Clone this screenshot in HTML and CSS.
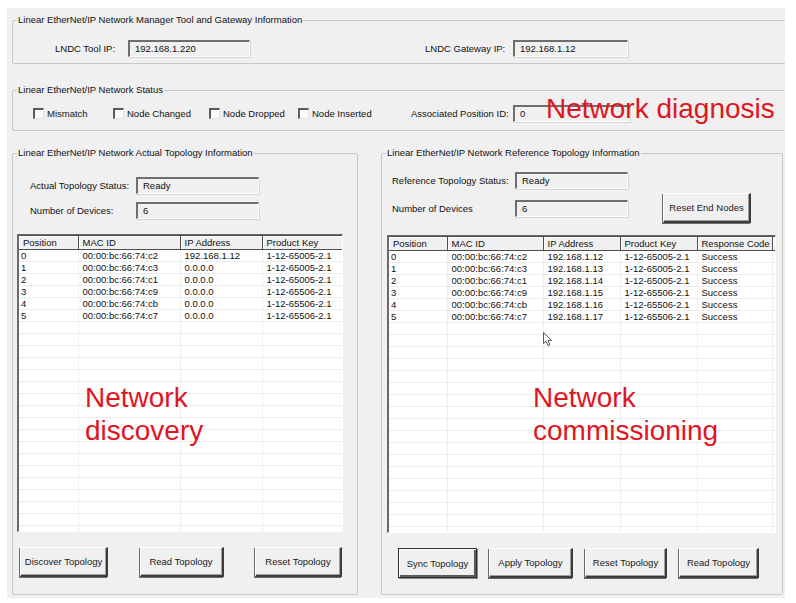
FILE: index.html
```html
<!DOCTYPE html>
<html lang="en">
<head>
    <meta charset="UTF-8">
    <title>Linear EtherNet/IP Network Manager</title>
    <link rel="stylesheet" href="styles.css">
</head>
<body>
    <div class="window">
        <fieldset class="group group-gateway">
            <legend>Linear EtherNet/IP Network Manager Tool and Gateway Information</legend>
            <div class="gateway-row">
                <span class="label label-tool">LNDC Tool IP:</span>
                <span class="textbox tb-tool">192.168.1.220</span>
                <span class="label label-gateway">LNDC Gateway IP:</span>
                <span class="textbox tb-gateway">192.168.1.12</span>
            </div>
        </fieldset>

        <fieldset class="group group-status">
            <legend>Linear EtherNet/IP Network Status</legend>
            <div class="status-row">
                <label class="check check-mismatch"><span class="box"></span>Mismatch</label>
                <label class="check check-changed"><span class="box"></span>Node Changed</label>
                <label class="check check-dropped"><span class="box"></span>Node Dropped</label>
                <label class="check check-inserted"><span class="box"></span>Node Inserted</label>
                <span class="label label-assoc">Associated Position ID:</span>
                <span class="textbox tb-assoc">0</span>
            </div>
        </fieldset>

        <div class="topology">
            <fieldset class="group group-actual">
                <legend>Linear EtherNet/IP Network Actual Topology Information</legend>
                <div class="group-body">
                    <div class="field">
                        <span class="label label-actual">Actual Topology Status:</span>
                        <span class="textbox tb-actual">Ready</span>
                    </div>
                    <div class="field field-second">
                        <span class="label label-actual">Number of Devices:</span>
                        <span class="textbox tb-actual">6</span>
                    </div>
                    <div class="list list-actual">
                        <table>
                            <colgroup><col style="width:59px"><col style="width:102px"><col style="width:82px"><col style="width:80px"></colgroup>
                            <thead>
                                <tr><th>Position</th><th>MAC ID</th><th>IP Address</th><th>Product Key</th></tr>
                            </thead>
                            <tbody>
                                <tr><td>0</td><td>00:00:bc:66:74:c2</td><td>192.168.1.12</td><td>1-12-65005-2.1</td></tr>
                                <tr><td>1</td><td>00:00:bc:66:74:c3</td><td>0.0.0.0</td><td>1-12-65005-2.1</td></tr>
                                <tr><td>2</td><td>00:00:bc:66:74:c1</td><td>0.0.0.0</td><td>1-12-65005-2.1</td></tr>
                                <tr><td>3</td><td>00:00:bc:66:74:c9</td><td>0.0.0.0</td><td>1-12-65506-2.1</td></tr>
                                <tr><td>4</td><td>00:00:bc:66:74:cb</td><td>0.0.0.0</td><td>1-12-65506-2.1</td></tr>
                                <tr><td>5</td><td>00:00:bc:66:74:c7</td><td>0.0.0.0</td><td>1-12-65506-2.1</td></tr>
                                <tr><td></td><td></td><td></td><td></td></tr>
                                <tr><td></td><td></td><td></td><td></td></tr>
                                <tr><td></td><td></td><td></td><td></td></tr>
                                <tr><td></td><td></td><td></td><td></td></tr>
                                <tr><td></td><td></td><td></td><td></td></tr>
                                <tr><td></td><td></td><td></td><td></td></tr>
                                <tr><td></td><td></td><td></td><td></td></tr>
                                <tr><td></td><td></td><td></td><td></td></tr>
                                <tr><td></td><td></td><td></td><td></td></tr>
                                <tr><td></td><td></td><td></td><td></td></tr>
                                <tr><td></td><td></td><td></td><td></td></tr>
                                <tr><td></td><td></td><td></td><td></td></tr>
                                <tr><td></td><td></td><td></td><td></td></tr>
                                <tr><td></td><td></td><td></td><td></td></tr>
                                <tr><td></td><td></td><td></td><td></td></tr>
                                <tr><td></td><td></td><td></td><td></td></tr>
                                <tr><td></td><td></td><td></td><td></td></tr>
                                <tr><td></td><td></td><td></td><td></td></tr>
                            </tbody>
                        </table>
                    </div>
                    <div class="buttons buttons-actual">
                        <button class="btn btn-discover">Discover Topology</button>
                        <button class="btn btn-read">Read Topology</button>
                        <button class="btn btn-reset">Reset Topology</button>
                    </div>
                </div>
            </fieldset>

            <fieldset class="group group-reference">
                <legend>Linear EtherNet/IP Network Reference Topology Information</legend>
                <div class="group-body">
                    <div class="field field-ref-first">
                        <span class="label label-ref">Reference Topology Status:</span>
                        <span class="textbox tb-ref">Ready</span>
                    </div>
                    <div class="field field-ref-second">
                        <span class="label label-ref">Number of Devices</span>
                        <span class="textbox tb-ref">6</span>
                        <button class="btn btn-end-nodes">Reset End Nodes</button>
                    </div>
                    <div class="list list-reference">
                        <table>
                            <colgroup><col style="width:58px"><col style="width:96px"><col style="width:77px"><col style="width:77px"><col style="width:75px"><col style="width:3px"></colgroup>
                            <thead>
                                <tr><th>Position</th><th>MAC ID</th><th>IP Address</th><th>Product Key</th><th>Response Code</th><th class="filler"></th></tr>
                            </thead>
                            <tbody>
                                <tr><td>0</td><td>00:00:bc:66:74:c2</td><td>192.168.1.12</td><td>1-12-65005-2.1</td><td>Success</td><td></td></tr>
                                <tr><td>1</td><td>00:00:bc:66:74:c3</td><td>192.168.1.13</td><td>1-12-65005-2.1</td><td>Success</td><td></td></tr>
                                <tr><td>2</td><td>00:00:bc:66:74:c1</td><td>192.168.1.14</td><td>1-12-65005-2.1</td><td>Success</td><td></td></tr>
                                <tr><td>3</td><td>00:00:bc:66:74:c9</td><td>192.168.1.15</td><td>1-12-65506-2.1</td><td>Success</td><td></td></tr>
                                <tr><td>4</td><td>00:00:bc:66:74:cb</td><td>192.168.1.16</td><td>1-12-65506-2.1</td><td>Success</td><td></td></tr>
                                <tr><td>5</td><td>00:00:bc:66:74:c7</td><td>192.168.1.17</td><td>1-12-65506-2.1</td><td>Success</td><td></td></tr>
                                <tr><td></td><td></td><td></td><td></td><td></td><td></td></tr>
                                <tr><td></td><td></td><td></td><td></td><td></td><td></td></tr>
                                <tr><td></td><td></td><td></td><td></td><td></td><td></td></tr>
                                <tr><td></td><td></td><td></td><td></td><td></td><td></td></tr>
                                <tr><td></td><td></td><td></td><td></td><td></td><td></td></tr>
                                <tr><td></td><td></td><td></td><td></td><td></td><td></td></tr>
                                <tr><td></td><td></td><td></td><td></td><td></td><td></td></tr>
                                <tr><td></td><td></td><td></td><td></td><td></td><td></td></tr>
                                <tr><td></td><td></td><td></td><td></td><td></td><td></td></tr>
                                <tr><td></td><td></td><td></td><td></td><td></td><td></td></tr>
                                <tr><td></td><td></td><td></td><td></td><td></td><td></td></tr>
                                <tr><td></td><td></td><td></td><td></td><td></td><td></td></tr>
                                <tr><td></td><td></td><td></td><td></td><td></td><td></td></tr>
                                <tr><td></td><td></td><td></td><td></td><td></td><td></td></tr>
                                <tr><td></td><td></td><td></td><td></td><td></td><td></td></tr>
                                <tr><td></td><td></td><td></td><td></td><td></td><td></td></tr>
                                <tr><td></td><td></td><td></td><td></td><td></td><td></td></tr>
                                <tr><td></td><td></td><td></td><td></td><td></td><td></td></tr>
                            </tbody>
                        </table>
                    </div>
                    <div class="buttons buttons-reference">
                        <button class="btn btn-sync">Sync Topology</button>
                        <button class="btn btn-apply">Apply Topology</button>
                        <button class="btn btn-reset-ref">Reset Topology</button>
                        <button class="btn btn-read-ref">Read Topology</button>
                    </div>
                </div>
            </fieldset>
        </div>

        <!-- red annotations laid over the dialog -->
        <span class="note note-diagnosis">Network diagnosis</span>
        <span class="note note-discovery">Network<br>discovery</span>
        <span class="note note-commissioning">Network<br>commissioning</span>
        <svg class="cursor" width="10" height="15" viewBox="0 0 10 15">
            <path d="M0.5 0.5 L0.5 11.5 L3.1 9.1 L5 13.6 L6.9 12.8 L5 8.4 L8.6 8.4 Z" fill="#ffffff" stroke="#5a5a5a" stroke-width="1" stroke-linejoin="round"/>
        </svg>
    </div>
</body>
</html>
```

FILE: styles.css
```css
  /* Page and dialog */
  body {
      margin: 0;
      background: #ffffff;
      font-family: "Liberation Sans", Arial, sans-serif;
      font-size: 9.5px;
      color: #101010;
  }

  .window {
      position: relative;
      width: 778px;
      height: 590px;
      margin: 8px 0 0 7px;
      padding: 6px 0 0 5px;
      box-sizing: border-box;
      background: #f0f0f0;
      overflow: hidden;
      display: flex;
      flex-direction: column;
  }

  /* Group boxes */
  .group {
      margin: 0;
      padding: 0;
      min-width: 0;
      box-sizing: border-box;
      border: 1px solid #c8c8c8;
      border-radius: 2px;
  }

  .group legend {
      margin-left: 4px;
      padding: 0 1px;
      height: 12px;
      line-height: 12px;
  }

  .group-gateway {
      width: 790px;
      height: 50px;
  }

  .group-status {
      width: 790px;
      height: 47px;
      margin-top: 20px;
  }

  .gateway-row,
  .status-row {
      display: flex;
      align-items: center;
      height: 17px;
  }

  .gateway-row {
      margin-top: 14px;
      padding-left: 42px;
  }

  .status-row {
      margin-top: 9px;
      padding-left: 20px;
  }

  .label {
      flex: none;
      white-space: nowrap;
  }

  .label-tool { width: 73px; }
  .label-gateway { width: 88px; margin-left: 175px; }
  .label-assoc { width: 102px; }
  .label-actual { width: 106px; }
  .label-ref { width: 123px; }

  /* Read-only text boxes */
  .textbox {
      flex: none;
      box-sizing: border-box;
      height: 17px;
      line-height: 14px;
      padding-left: 5px;
      background: #f0f0f0;
      border-top: 2px solid #6e6e6e;
      border-left: 2px solid #6e6e6e;
      border-right: 1px solid #fdfdfd;
      border-bottom: 1px solid #fdfdfd;
      box-shadow: 1px 1px 0 #d6d6d6;
  }

  .tb-tool { width: 122px; }
  .tb-gateway { width: 115px; }
  .tb-assoc { width: 117px; }
  .tb-actual { width: 123px; }
  .tb-ref { width: 113px; }

  /* Check boxes */
  .check {
      display: flex;
      align-items: center;
      flex: none;
  }

  .check .box {
      width: 11px;
      height: 11px;
      margin-right: 3px;
      box-sizing: border-box;
      background: #fbfbfb;
      border-top: 2px solid #5c5c5c;
      border-left: 2px solid #5c5c5c;
      border-right: 1px solid #e2e2e2;
      border-bottom: 1px solid #e2e2e2;
  }

  .check-mismatch { width: 80px; }
  .check-changed { width: 96px; }
  .check-dropped { width: 89px; }
  .check-inserted { width: 113px; }

  /* Topology panels */
  .topology {
      display: flex;
      gap: 23px;
      margin-top: 16px;
      height: 448px;
  }

  .group-actual {
      width: 346px;
      height: 448px;
  }

  .group-reference {
      width: 402px;
      height: 448px;
  }

  .group-body {
      display: flex;
      flex-direction: column;
  }

  .field {
      display: flex;
      align-items: center;
      height: 17px;
  }

  .group-actual .field {
      margin-top: 18px;
      padding-left: 17px;
  }

  .group-actual .field-second {
      margin-top: 8px;
  }

  .group-reference .field {
      padding-left: 10px;
  }

  .field-ref-first {
      margin-top: 13px;
  }

  .field-ref-second {
      margin-top: 4px;
      height: 30px;
  }

  /* List views */
  .list {
      height: 298px;
      box-sizing: border-box;
      background: #ffffff;
      border-top: 1px solid #6a6a6a;
      border-left: 2px solid #6a6a6a;
      border-right: 1px solid #ffffff;
      border-bottom: 1px solid #ffffff;
      overflow: hidden;
  }

  .list-actual {
      width: 326px;
      margin: 15px 0 0 4px;
  }

  .list-reference {
      width: 389px;
      margin: 12px 0 0 5px;
  }

  .list table {
      table-layout: fixed;
      border-collapse: collapse;
      width: 100%;
  }

  .list th {
      height: 13px;
      padding: 0 4px;
      text-align: left;
      font-weight: normal;
      white-space: nowrap;
      background: #f0f0f0;
      border-top: 1px solid #4e4e4e;
      border-right: 1px solid #4e4e4e;
      border-bottom: 1px solid #4e4e4e;
      box-shadow: inset 1px 1px 0 #ffffff;
  }

  .list th.filler {
      border-right: none;
      padding: 0;
  }

  .list td {
      height: 11px;
      line-height: 11px;
      padding: 0 4px;
      white-space: nowrap;
      overflow: hidden;
      border-right: 1px solid #efefef;
      border-bottom: 1px solid #ececec;
  }

  .list td:first-child {
      padding-left: 2px;
  }

  /* Push buttons */
  .buttons {
      display: flex;
      justify-content: space-between;
      margin-top: 15px;
  }

  .buttons-actual {
      padding: 0 15px 0 7px;
  }

  .buttons-reference {
      padding: 0 23px 0 16px;
  }

  .btn {
      flex: none;
      height: 30px;
      padding: 0;
      font-family: inherit;
      font-size: 9.5px;
      color: #1a1a1a;
      background: #f0f0f0;
      border-top: 1px solid #ffffff;
      border-left: 1px solid #ffffff;
      border-right: 2px solid #3c3c3c;
      border-bottom: 2px solid #3c3c3c;
      box-shadow: inset -1px -1px 0 #a0a0a0, -1px 1px 0 #6a6a6a;
  }

  .btn-discover { width: 88px; }
  .btn-read { width: 84px; }
  .btn-reset { width: 87px; }

  .btn-sync {
      width: 79px;
      border: 1px solid #2e2e2e;
      box-shadow: inset 1px 1px 0 #ffffff, inset -2px -2px 0 #5a5a5a, 1px 1px 0 #8a8a8a;
  }
  .btn-apply { width: 84px; }
  .btn-reset-ref { width: 82px; }
  .btn-read-ref { width: 80px; }

  .btn-end-nodes {
      width: 88px;
      margin-left: 35px;
  }

  /* Red annotations */
  .note {
      position: absolute;
      font-family: "Liberation Sans", Arial, sans-serif;
      font-size: 28px;
      color: #e0161f;
      white-space: nowrap;
  }

  .note-diagnosis {
      left: 539px;
      top: 87px;
      line-height: 27px;
  }

  .note-discovery,
  .note-commissioning {
      top: 373px;
      line-height: 33px;
  }

  .note-discovery { left: 78px; }
  .note-commissioning { left: 526px; }

  .cursor {
      position: absolute;
      left: 536px;
      top: 324px;
  }
```
